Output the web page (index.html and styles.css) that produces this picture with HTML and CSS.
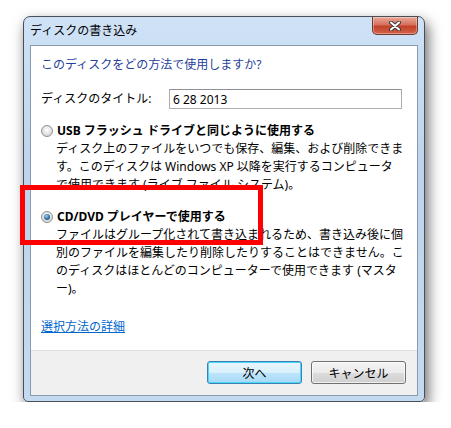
FILE: index.html
```html
<!DOCTYPE html>
<html lang="ja">
<head>
    <meta charset="UTF-8">
    <title>ディスクの書き込み</title>
    <link rel="stylesheet" href="styles.css">
</head>
<body>
    <div class="window">
        <div class="titlebar">
            <span class="title">ディスクの書き込み</span>
            <button class="close-btn" type="button">
                <svg width="14" height="10" viewBox="0 0 14 10">
                    <path d="M3 1.5 L11 8.5 M11 1.5 L3 8.5" stroke="#3b3b3b" stroke-width="4" stroke-linecap="round"/>
                    <path d="M3 1.5 L11 8.5 M11 1.5 L3 8.5" stroke="#fff" stroke-width="2" stroke-linecap="round"/>
                </svg>
            </button>
        </div>
        <div class="client">
            <div class="content">
                <p class="instruction">このディスクをどの方法で使用しますか?</p>
                <div class="title-row">
                    <label for="discTitle">ディスクのタイトル:</label>
                    <input id="discTitle" type="text" value="6 28 2013">
                </div>
                <div class="option option-first">
                    <div class="option-head">
                        <span class="radio"></span>
                        <span class="option-label">USB フラッシュ ドライブと同じように使用する</span>
                    </div>
                    <p class="option-desc">ディスク上のファイルをいつでも保存、編集、および削除できま<br>す。このディスクは Windows XP 以降を実行するコンピュータ<br>で使用できます (ライブ ファイル システム)。</p>
                </div>
                <div class="option">
                    <div class="option-head">
                        <span class="radio checked"></span>
                        <span class="option-label">CD/DVD プレイヤーで使用する</span>
                    </div>
                    <p class="option-desc">ファイルはグループ化されて書き込まれるため、書き込み後に個<br>別のファイルを編集したり削除したりすることはできません。こ<br>のディスクはほとんどのコンピューターで使用できます (マスタ<br>ー)。</p>
                </div>
                <a href="#" class="more-link">選択方法の詳細</a>
            </div>
            <div class="footer">
                <button class="btn btn-default" type="button">次へ</button>
                <button class="btn" type="button">キャンセル</button>
            </div>
        </div>
    </div>
    <div class="highlight"></div>
</body>
</html>
```

FILE: styles.css
```css
body {
    margin: 0;
    padding: 16px 0 0 23px;
    background-color: #fff;
    font-family: "Noto Sans", "Noto Sans CJK JP", sans-serif;
    font-size: 12px;
    color: #000;
}

.window {
    width: 402px;
    height: 386px;
    box-sizing: border-box;
    padding: 0 6px 5px 6px;
    border: 1px solid #4a4f57;
    border-radius: 7px 7px 5px 5px;
    background: linear-gradient(#cfe2f6, #bcd4ee 40%, #c4daf1);
    box-shadow: 3px 6px 14px rgba(0, 0, 0, 0.6);
}

.titlebar {
    height: 28px;
    display: flex;
    justify-content: space-between;
    align-items: flex-start;
}

.title {
    align-self: center;
    line-height: 18px;
    color: #000;
}

.close-btn {
    width: 46px;
    height: 18px;
    margin: 0;
    padding: 0;
    display: flex;
    align-items: center;
    justify-content: center;
    border: 1px solid #6e3a30;
    border-top: none;
    border-radius: 0 0 5px 5px;
    background: linear-gradient(#e9a99a, #d7705c 45%, #c2412a 55%, #d4624a);
    box-shadow: inset 0 0 0 1px rgba(255, 255, 255, 0.35);
}

.client {
    height: 351px;
    box-sizing: border-box;
    border: 1px solid #8a9bb0;
    background-color: #fff;
    display: flex;
    flex-direction: column;
}

.content {
    flex: 1;
    padding: 10px 10px 0 10px;
}

.instruction {
    margin: 0;
    line-height: 18px;
    color: #1f3f9c;
}

.title-row {
    margin-top: 15px;
    display: flex;
    align-items: center;
    height: 20px;
}

.title-row label {
    width: 128px;
    line-height: 18px;
}

.title-row input {
    width: 233px;
    height: 20px;
    box-sizing: border-box;
    margin: 0;
    padding: 0 3px;
    border: 1px solid #abadb3;
    border-top-color: #8e9095;
    font-family: inherit;
    font-size: 12px;
    color: #000;
}

.option {
    margin-top: 14px;
}

.option-first {
    margin-top: 13px;
}

.option-head {
    display: flex;
    align-items: center;
    height: 18px;
}

.radio {
    width: 12px;
    height: 12px;
    box-sizing: border-box;
    border-radius: 50%;
    border: 1px solid #8f9193;
    background: radial-gradient(circle at 50% 40%, #ffffff, #e4e4e4 50%, #c7c7c7);
    margin-right: 4px;
    display: flex;
    align-items: center;
    justify-content: center;
}

.radio.checked::after {
    content: "";
    width: 6px;
    height: 6px;
    border-radius: 50%;
    background: radial-gradient(circle at 40% 35%, #a6d3f2, #2d6da3 55%, #173f66);
}

.option-label {
    font-weight: bold;
    line-height: 18px;
}

.option-desc {
    margin: 0 0 0 15px;
    line-height: 18px;
    white-space: nowrap;
}

.more-link {
    display: inline-block;
    margin-top: 20px;
    line-height: 18px;
    color: #0066cc;
}

.footer {
    height: 45px;
    box-sizing: border-box;
    border-top: 1px solid #dfdfdf;
    background-color: #f0f0f0;
    display: flex;
    justify-content: flex-end;
    align-items: flex-start;
    gap: 9px;
    padding: 10px 11px 0 0;
}

.btn {
    width: 95px;
    height: 23px;
    margin: 0;
    padding: 0;
    border: 1px solid #707070;
    border-radius: 3px;
    background: linear-gradient(#f3f3f3, #ebebeb 50%, #dddddd 51%, #cfcfcf);
    font-family: inherit;
    font-size: 12px;
    color: #000;
    box-shadow: inset 0 0 0 1px rgba(255, 255, 255, 0.7);
}

.btn-default {
    border-color: #3c7fb1;
    background: linear-gradient(#eaf6fd, #d9f0fc 50%, #bee6fd 51%, #a7d9f5);
    box-shadow: inset 0 0 0 1px #48d8fb;
}

.highlight {
    position: absolute;
    left: 20px;
    top: 185px;
    width: 243px;
    height: 60px;
    box-sizing: border-box;
    border: 5px solid #f00;
}
```
